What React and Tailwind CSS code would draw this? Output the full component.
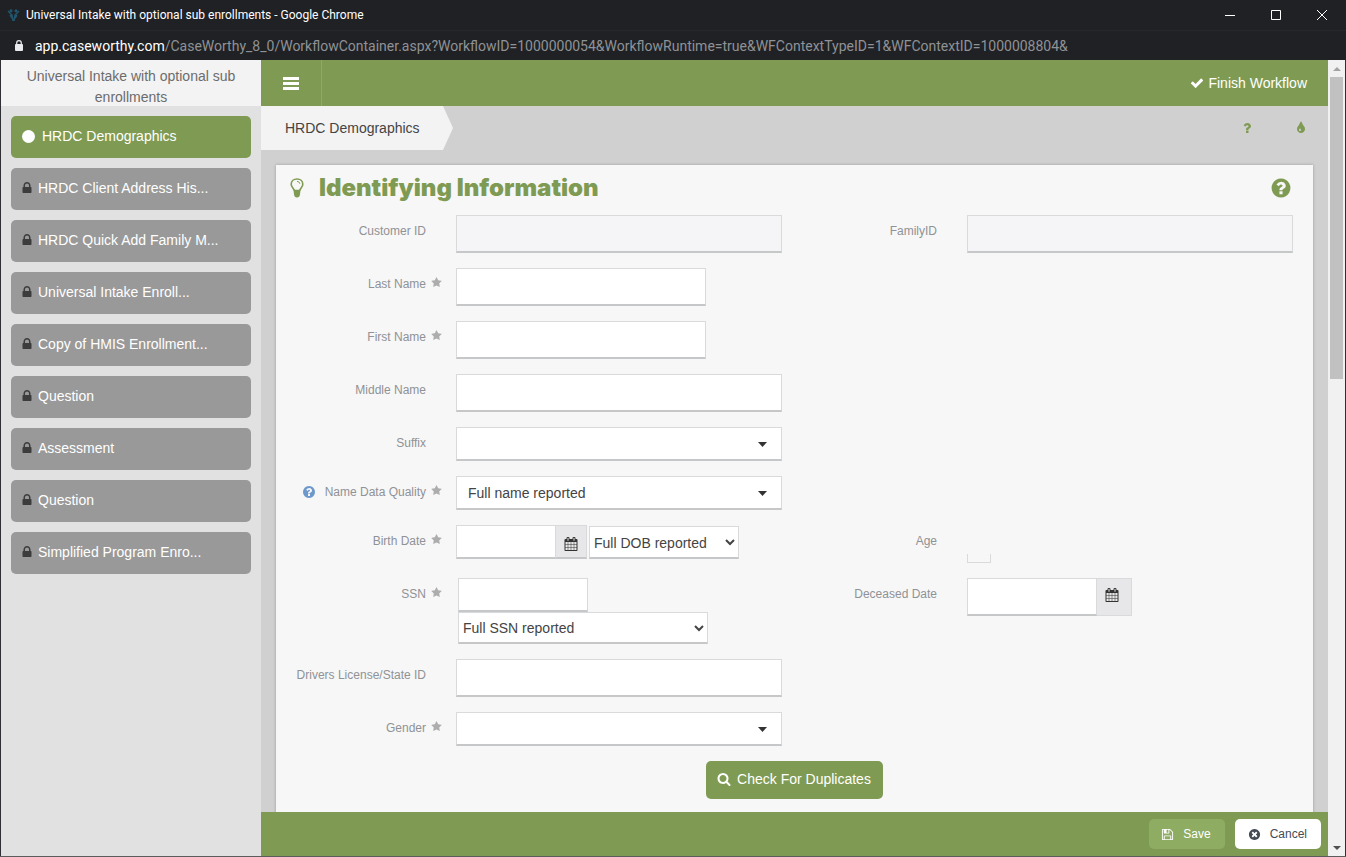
import React from "react";

const PATHS = {
  check:
    "M1671 566q0 40-28 68l-724 724-136 136q-28 28-68 28t-68-28l-136-136-362-362q-28-28-28-68t28-68l136-136q28-28 68-28t68 28l294 295 656-657q28-28 68-28t68 28l136 136q28 28 28 68z",
  lock:
    "M640 768h512v-192q0-106-75-181t-181-75-181 75-75 181v192zm832 96v576q0 40-28 68t-68 28h-960q-40 0-68-28t-28-68v-576q0-40 28-68t68-28h32v-192q0-184 132-316t316-132 316 132 132 316v192h32q40 0 68 28t28 68z",
  calendar:
    "M192 1664h288v-288h-288v288zm352 0h320v-288h-320v288zm-352-352h288v-320h-288v320zm352 0h320v-320h-320v320zm-352-384h288v-288h-288v288zm736 736h320v-288h-320v288zm-384-736h320v-288h-320v288zm768 736h288v-288h-288v288zm-384-352h320v-320h-320v320zm-352-864v-288q0-13-9.5-22.5t-22.5-9.5h-64q-13 0-22.5 9.5t-9.5 22.5v288q0 13 9.5 22.5t22.5 9.5h64q13 0 22.5-9.5t9.5-22.5zm736 864h288v-320h-288v320zm-384-384h320v-288h-320v288zm384 0h288v-288h-288v288zm32-480v-288q0-13-9.5-22.5t-22.5-9.5h-64q-13 0-22.5 9.5t-9.5 22.5v288q0 13 9.5 22.5t22.5 9.5h64q13 0 22.5-9.5t9.5-22.5zm384-64v1280q0 52-38 90t-90 38h-1408q-52 0-90-38t-38-90v-1280q0-52 38-90t90-38h128v-96q0-66 47-113t113-47h64q66 0 113 47t47 113v96h384v-96q0-66 47-113t113-47h64q66 0 113 47t47 113v96h128q52 0 90 38t38 90z",
  search:
    "M1216 832q0-185-131.5-316.5t-316.5-131.5-316.5 131.5-131.5 316.5 131.5 316.5 316.5 131.5 316.5-131.5 131.5-316.5zm512 832q0 52-38 90t-90 38q-54 0-90-38l-343-342q-179 124-399 124-143 0-273.5-55.5t-225-150-150-225-55.5-273.5 55.5-273.5 150-225 225-150 273.5-55.5 273.5 55.5 225 150 150 225 55.5 273.5q0 220-124 399l343 343q37 37 37 90z",
  question:
    "M1088 1256v240q0 16-12 28t-28 12h-240q-16 0-28-12t-12-28v-240q0-16 12-28t28-12h240q16 0 28 12t12 28zm316-600q0 54-15.5 101t-35 76.5-55 59.5-57.5 43.5-61 35.5q-41 23-68.5 65t-27.5 67q0 17-12 32.5t-28 15.5h-240q-15 0-25.5-18.5t-10.5-37.5v-45q0-83 65-156.5t143-108.5q59-27 84-56t25-76q0-42-46.5-74t-107.5-32q-65 0-108 29-35 25-107 115-13 16-31 16-12 0-25-8l-164-125q-13-10-15.5-25t5.5-28q160-266 464-266 80 0 161 31t146 83 106 127.5 41 158.5z",
  questionCircle:
    "M1024 1376v-192q0-14-9-23t-23-9h-192q-14 0-23 9t-9 23v192q0 14 9 23t23 9h192q14 0 23-9t9-23zm256-672q0-88-55.5-163t-138.5-116-170-41q-243 0-371 213-15 24 8 42l132 100q7 6 19 6 16 0 25-12 53-68 86-92 34-24 86-24 48 0 85.5 26t37.5 59q0 38-20 61t-68 45q-63 28-115.5 86.5t-52.5 125.5v36q0 14 9 23t23 9h192q14 0 23-9t9-23q0-19 21.5-49.5t54.5-49.5q32-18 49-28.5t46-35 44.5-48 28-60.5 12.5-81zm384 192q0 209-103 385.5t-279.5 279.5-385.5 103-385.5-103-279.5-279.5-103-385.5 103-385.5 279.5-279.5 385.5-103 385.5 103 279.5 279.5 103 385.5z",
  star:
    "M1728 647q0 22-26 48l-363 354 86 500q1 7 1 20 0 21-10.5 35.5t-30.5 14.5q-19 0-40-12l-449-236-449 236q-22 12-40 12-21 0-31.5-14.5t-10.5-35.5q0-6 2-20l86-500-364-354q-25-27-25-48 0-37 56-46l502-73 225-455q19-41 49-41t49 41l225 455 502 73q56 9 56 46z",
  save:
    "M512 1536h768v-384h-768v384zm896 0h128v-896q0-14-10-38.5t-20-34.5l-281-281q-10-10-34-20t-39-10v416q0 40-28 68t-68 28h-576q-40 0-68-28t-28-68v-416h-128v1280h128v-416q0-40 28-68t68-28h832q40 0 68 28t28 68v416zm-384-928v-320q0-13-9.5-22.5t-22.5-9.5h-192q-13 0-22.5 9.5t-9.5 22.5v320q0 13 9.5 22.5t22.5 9.5h192q13 0 22.5-9.5t9.5-22.5zm640 32v928q0 40-28 68t-68 28h-1344q-40 0-68-28t-28-68v-1344q0-40 28-68t68-28h928q40 0 88 20t76 48l280 280q28 28 48 76t20 88z",
  timesCircle:
    "M1277 1122q0-26-19-45l-181-181 181-181q19-19 19-45 0-27-19-46l-90-90q-19-19-46-19-26 0-45 19l-181 181-181-181q-19-19-45-19-27 0-46 19l-90 90q-19 19-19 46 0 26 19 45l181 181-181 181q-19 19-19 45 0 27 19 46l90 90q19 19 46 19 26 0 45-19l181-181 181 181q19 19 45 19 27 0 46-19l90-90q19-19 19-46zm387-226q0 209-103 385.5t-279.5 279.5-385.5 103-385.5-103-279.5-279.5-103-385.5 103-385.5 279.5-279.5 385.5-103 385.5 103 279.5 279.5 103 385.5z",
  tint:
    "M896 1152q0-36-20-69-1-1-15.5-22.5t-25.5-38-25-44-21-50.5q-4-16-21-16t-21 16q-7 23-21 50.5t-25 44-25.5 38-15.5 22.5q-20 33-20 69 0 53 37.5 90.5t90.5 37.5 90.5-37.5 37.5-90.5zm512-128q0 212-150 362t-362 150-362-150-150-362q0-145 81-275 6-9 62.5-90.5t101-151 99.5-178 83-201.5q9-30 34-47t51-17 51.5 17 33.5 47q28 93 83 201.5t99.5 178 101 151 62.5 90.5q81 127 81 275z",
};

function Icon({ name, className }) {
  return (
    <svg viewBox="0 0 1792 1792" fill="currentColor" aria-hidden="true" className={`shrink-0 ${className}`}>
      <path d={PATHS[name]} />
    </svg>
  );
}

const STEPS = [
  "HRDC Client Address His...",
  "HRDC Quick Add Family M...",
  "Universal Intake Enroll...",
  "Copy of HMIS Enrollment...",
  "Question",
  "Assessment",
  "Question",
  "Simplified Program Enro...",
];

const BORDER = "border border-b-2 border-[#d9dadc] border-b-[#c6c7c9]";

function Label({ htmlFor, children, required, help, second }) {
  return (
    <div className={`flex h-8 items-center justify-end pr-[14px] ${second ? "col-start-3" : "col-start-1"}`}>
      {help && <Icon name="questionCircle" className="mr-[9px] size-[14px] text-[#6d98cc]" />}
      <label htmlFor={htmlFor} className="text-xs whitespace-nowrap text-[#8f9296]">
        {children}
      </label>
      <span className="flex w-4 justify-end pb-1">
        {required && <Icon name="star" className="size-[11px] text-[#adadad]" />}
      </span>
    </div>
  );
}

function TextBox({ id, className = "h-[38px] w-full", readOnly }) {
  return (
    <input
      id={id}
      type="text"
      readOnly={readOnly}
      className={`min-w-0 px-3 text-sm text-[#444] outline-none ${BORDER} ${readOnly ? "bg-[#f5f5f7]" : "bg-white"} ${className}`}
    />
  );
}

function Dropdown({ id, value = "" }) {
  return (
    <div className="relative">
      <select
        id={id}
        defaultValue={value}
        className={`block h-[34px] w-full appearance-none bg-white pt-px pr-8 pl-[11px] text-sm text-[#444] outline-none ${BORDER}`}
      >
        <option value={value}>{value}</option>
      </select>
      <svg viewBox="0 0 9 5" className="pointer-events-none absolute top-[15px] right-[15px] h-[5px] w-[9px] fill-[#333]" aria-hidden="true">
        <path d="M0 0h9L4.500 5z" />
      </svg>
    </div>
  );
}

export default function App() {
  return (
    <div className="flex h-screen flex-col overflow-hidden border-b border-[#5c5c5c] bg-[#202124] font-['Liberation_Sans',Arial,sans-serif] text-[#444]">
      <div className="flex h-[31px] shrink-0 items-center justify-between border-b border-[#27282b] pr-px pl-[7px] font-['Roboto','Noto_Sans',sans-serif] text-xs text-white">
        <div className="flex items-center gap-[6px]">
          <svg viewBox="0 0 13 13" className="size-[13px]" fill="none" stroke="#22566d" strokeWidth="1.500" aria-hidden="true">
            <path d="M1 2l4 4 1 6M12 2L8 6l-1 6M3 6l2 3M10 6L8 9" />
            <circle cx="4" cy="1.800" r=".8" />
            <circle cx="9" cy="1.800" r=".8" />
          </svg>
          <span className="whitespace-nowrap">Universal Intake with optional sub enrollments - Google Chrome</span>
        </div>
        <div className="flex h-full">
          <button type="button" aria-label="Minimize" className="flex w-[46px] items-center justify-center">
            <svg viewBox="0 0 10 10" className="size-[10px]" stroke="#fff"><path d="M0 5.500h10" /></svg>
          </button>
          <button type="button" aria-label="Maximize" className="flex w-[46px] items-center justify-center">
            <svg viewBox="0 0 10 10" className="size-[10px]" stroke="#fff" fill="none"><path d="M.5.5h9v9h-9z" /></svg>
          </button>
          <button type="button" aria-label="Close" className="flex w-[46px] items-center justify-center">
            <svg viewBox="0 0 10 10" className="size-[10px]" stroke="#fff"><path d="M0 0l10 10M10 0L0 10" /></svg>
          </button>
        </div>
      </div>
      <div className="flex h-[29px] shrink-0 items-center gap-[11px] pl-[14px] font-['Roboto','Noto_Sans',sans-serif] text-sm whitespace-nowrap">
        <svg viewBox="0 0 10 12" className="h-3 w-[10px] shrink-0" aria-hidden="true">
          <rect x="1" y="4" width="8" height="7" rx="1" fill="#e8eaed" />
          <path d="M2.700 4.500V3a2.300 2.300 0 0 1 4.600 0v1.500" fill="none" stroke="#e8eaed" strokeWidth="1.200" />
        </svg>
        <p className="text-[#8f9296]">
          <span className="text-white">app.caseworthy.com</span>
          /CaseWorthy_8_0/WorkflowContainer.aspx?WorkflowID=1000000054&amp;WorkflowRuntime=true&amp;WFContextTypeID=1&amp;WFContextID=1000008804&amp;
        </p>
      </div>

      <div className="flex min-h-0 flex-1 border-x border-[#303034]">
        <aside className="flex w-[260px] shrink-0 flex-col bg-[#e1e1e1]">
          <h1 className="h-[46px] bg-[#f3f3f3] px-4 pt-[6px] text-center text-sm leading-[21px] text-[#6c6c6c]">
            Universal Intake with optional sub enrollments
          </h1>
          <nav className="flex flex-col gap-[10px] p-[10px]">
            <button type="button" className="flex h-[42px] items-center gap-[7px] rounded-[5px] bg-[#7f9b53] pb-[2px] pl-[11px] text-sm text-white">
              <span className="size-[13px] rounded-full bg-white" />
              HRDC Demographics
            </button>
            {STEPS.map((step, i) => (
              <button key={i} type="button" className="flex h-[42px] items-center gap-1 rounded-[5px] bg-[#999] pb-[2px] pl-[9px] text-sm text-white">
                <Icon name="lock" className="size-[14px] text-[#3c3c3c]" />
                {step}
              </button>
            ))}
          </nav>
        </aside>

        <div className="flex min-w-0 flex-1 flex-col bg-[#d0d0d0]">
          <header className="flex h-[46px] shrink-0 items-center justify-between bg-[#7f9b53] text-white">
            <button type="button" aria-label="Menu" className="flex h-full w-[61px] items-center justify-center border-r border-[#8fa968]">
              <svg viewBox="0 0 16 13" className="h-[13px] w-4 fill-white"><path d="M0 0h16v3H0zM0 5h16v3H0zM0 10h16v3H0z" /></svg>
            </button>
            <button type="button" className="flex items-center gap-1 pr-[21px] text-sm">
              <Icon name="check" className="size-[14px]" />
              Finish Workflow
            </button>
          </header>

          <main className="min-h-0 flex-1 overflow-hidden">
            <div className="flex h-11 items-center justify-between pr-5">
              <div className="flex h-full">
                <a href="#demographics" className="flex items-center bg-[#f3f3f3] pr-[23px] pl-6 text-sm text-[#444]">HRDC Demographics</a>
                <svg viewBox="0 0 10 44" preserveAspectRatio="none" className="h-11 w-[10px] fill-[#f3f3f3]" aria-hidden="true"><path d="M0 0l10 22L0 44z" /></svg>
              </div>
              <div className="flex gap-10 text-[#7f9b53]">
                <button type="button" aria-label="Help"><Icon name="question" className="size-[14px]" /></button>
                <button type="button" aria-label="Theme"><Icon name="tint" className="size-[14px]" /></button>
              </div>
            </div>

            <section className="mx-[15px] mt-[15px] h-full bg-[#f7f7f7] pr-5 shadow-[0_0_3px_rgba(0,0,0,0.25)]">
              <div className="flex h-[50px] items-center justify-between pb-1 pl-[14px] text-[#7f9b53]">
                <div className="flex items-center gap-[15px]">
                  <svg viewBox="0 0 14 20" className="h-5 w-[14px]" fill="none" aria-hidden="true">
                    <path d="M4.200 12.500C3.800 10.300 1.200 9.300 1.200 6.200 1.200 3 3.800 1 7 1s5.800 2 5.800 5.200c0 3.100-2.600 4.100-3 6.300" stroke="currentColor" strokeWidth="1.600" />
                    <path d="M3.400 11.300l1.600.4h4l1.600-.4-.6 5.200c-.3 2-1.200 3-3 3s-2.700-1-3-3z" fill="currentColor" />
                    <path d="M7 3.500c1.700 0 2.700.9 2.800 2.300" stroke="currentColor" />
                  </svg>
                  <h2 className="font-['Inter','Liberation_Sans',sans-serif] text-2xl font-black">Identifying Information</h2>
                </div>
                <button type="button" aria-label="Section help" className="pr-px"><Icon name="questionCircle" className="size-[22px]" /></button>
              </div>

              <form className="grid grid-cols-[180px_minmax(0,1fr)_185px_minmax(0,1fr)] items-start gap-y-[15px]" onSubmit={(e) => e.preventDefault()}>
                <Label htmlFor="customer">Customer ID</Label>
                <TextBox id="customer" readOnly />
                <Label htmlFor="family" second>FamilyID</Label>
                <TextBox id="family" readOnly />

                <Label htmlFor="last" required>Last Name</Label>
                <TextBox id="last" className="h-[38px] w-[250px]" />

                <Label htmlFor="first" required>First Name</Label>
                <TextBox id="first" className="h-[38px] w-[250px]" />

                <Label htmlFor="middle">Middle Name</Label>
                <TextBox id="middle" />

                <Label htmlFor="suffix">Suffix</Label>
                <Dropdown id="suffix" />

                <Label htmlFor="quality" required help>Name Data Quality</Label>
                <Dropdown id="quality" value="Full name reported" />

                <Label htmlFor="birth" required>Birth Date</Label>
                <div className="flex h-[34px] items-end">
                  <TextBox id="birth" className="h-[34px] w-[100px]" />
                  <button type="button" aria-label="Pick birth date" className={`mr-[2px] flex h-[34px] w-[31px] items-center justify-center border-l-0 bg-[#e7e7e9] pt-1 text-[#333] ${BORDER}`}>
                    <Icon name="calendar" className="size-[14px]" />
                  </button>
                  <select aria-label="Birth date quality" className={`h-[33px] w-[150px] bg-white pt-[2px] text-sm text-[#444] ${BORDER}`}>
                    <option>Full DOB reported</option>
                  </select>
                </div>
                <Label htmlFor="age" second>Age</Label>
                <div className="flex h-[38px] items-end">
                  <output id="age" className="h-[9px] w-6 border border-t-0 border-[#d9dadc]" />
                </div>

                <Label htmlFor="ssn" required>SSN</Label>
                <div className="flex flex-col items-start pl-[2px]">
                  <TextBox id="ssn" className="h-[34px] w-[130px]" />
                  <select aria-label="SSN quality" className={`h-8 w-[250px] bg-white text-sm text-[#444] ${BORDER}`}>
                    <option>Full SSN reported</option>
                  </select>
                </div>
                <Label htmlFor="deceased" second>Deceased Date</Label>
                <div className="flex">
                  <TextBox id="deceased" className="h-[38px] w-[130px]" />
                  <button type="button" aria-label="Pick deceased date" className="flex h-[38px] w-[35px] items-center justify-center border border-l-0 border-[#d9dadc] bg-[#e7e7e9] pr-1 pb-[5px] text-[#333]">
                    <Icon name="calendar" className="size-[14px]" />
                  </button>
                </div>

                <Label htmlFor="license">Drivers License/State ID</Label>
                <TextBox id="license" />

                <Label htmlFor="gender" required>Gender</Label>
                <Dropdown id="gender" />

                <div className="col-span-4 col-start-1 flex justify-center pl-5">
                  <button type="button" className="flex h-[38px] items-center gap-[6px] rounded-[5px] bg-[#7f9b53] pr-3 pb-[2px] pl-[11px] text-sm text-white">
                    <Icon name="search" className="size-[14px]" />
                    Check For Duplicates
                  </button>
                </div>
              </form>
            </section>
          </main>

          <footer className="flex h-11 shrink-0 items-center justify-end gap-[10px] bg-[#7f9b53] pr-[7px] text-xs">
            <button type="button" className="flex h-[30px] items-center gap-[9px] rounded-[5px] bg-[#8fac63] pr-[14px] pl-3 text-white">
              <Icon name="save" className="size-[13px]" />
              Save
            </button>
            <button type="button" className="flex h-[30px] items-center gap-[9px] rounded-[5px] bg-white pr-[14px] pl-[13px] text-[#444b55]">
              <Icon name="timesCircle" className="size-[13px]" />
              Cancel
            </button>
          </footer>
        </div>

        <div className="flex w-[17px] shrink-0 flex-col items-center bg-[#f1f1f1]" aria-hidden="true">
          <div className="flex h-[17px] items-center"><svg viewBox="0 0 8 4" className="h-1 w-2 fill-[#a3a3a3]"><path d="M0 4h8L4 0z" /></svg></div>
          <div className="h-[302px] w-[13px] bg-[#c1c1c1]" />
          <div className="mt-auto flex h-[17px] items-center"><svg viewBox="0 0 8 4" className="h-1 w-2 fill-[#505050]"><path d="M0 0h8L4 4z" /></svg></div>
        </div>
      </div>
    </div>
  );
}
